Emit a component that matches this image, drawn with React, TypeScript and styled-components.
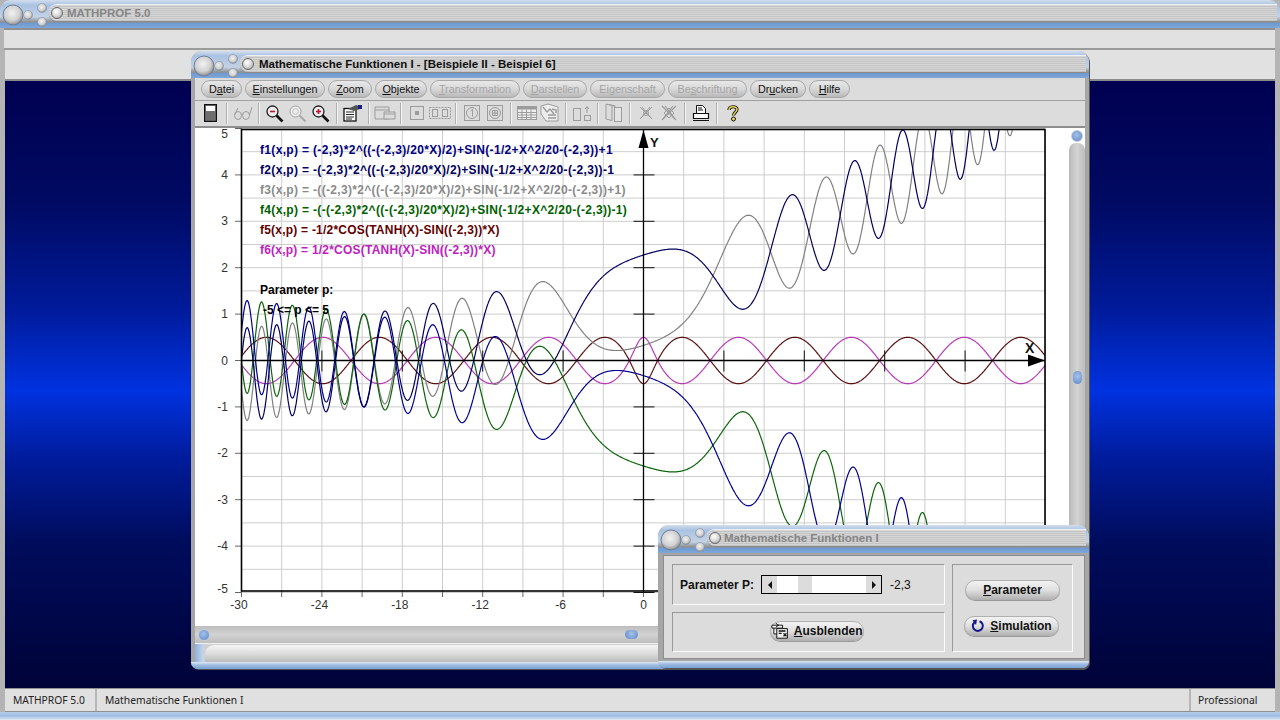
import * as React from 'react';
import styled, { createGlobalStyle } from 'styled-components';

const GlobalStyle = createGlobalStyle`
  html, body {
    margin: 0;
    padding: 0;
    overflow: hidden;
    background: #000;
    font-family: 'Liberation Sans', Arial, sans-serif;
  }
`;

const Screen = styled.div`
  width: 1280px;
  height: 720px;
  display: flex;
  flex-direction: column;
  overflow: hidden;
  background: #b4b4b4;
`;

const Title = styled.div<{ $height: number }>`
  height: ${p => p.$height}px;
  flex: none;
  box-sizing: border-box;
  display: flex;
  align-items: flex-start;
  padding: 3px 3px 0 2px;
  border-radius: 11px 11px 0 0;
  background: linear-gradient(180deg, #d3deee 0, #a9c2e2 18%, #c4d2e6 60%, #8f8f8f 78%, #6f9bd2 84%, #7fa7da 100%);
`;

const TitleTrack = styled.div`
  flex: 1;
  height: 16px;
  margin-top: 2px;
  margin-left: -1px;
  display: flex;
  align-items: center;
  gap: 4px;
  padding-left: 2px;
  border-radius: 9px 0 0 9px;
  box-shadow: 0 1px 0 #8a8a8a, 0 -1px 0 #eef0f4;
  background: repeating-linear-gradient(180deg, #d6d6d6 0 1px, #c4c4c4 1px 2px);
`;

const TitleBall = styled.span`
  width: 12px;
  height: 12px;
  flex: none;
  border-radius: 50%;
  border: 1px solid #6a6a6a;
  box-sizing: border-box;
  background: radial-gradient(circle at 40% 35%, #fff 0, #d8d8d8 50%, #8f8f8f 100%);
`;

const TitleText = styled.span<{ $dim?: boolean; $nudge?: number }>`
  font-size: 11.5px;
  font-weight: bold;
  padding-right: 6px;
  white-space: nowrap;
  margin-left: ${p => p.$nudge || 0}px;
  color: ${p => (p.$dim ? '#858585' : '#101010')};
`;

const Frame = styled.div`
  flex: 1;
  min-height: 0;
  display: flex;
  flex-direction: column;
  padding: 0 5px;
`;

const TopStrip = styled.div`
  height: 22px;
  flex: none;
  box-sizing: border-box;
  border-top: 2px solid #8f8f8f;
  border-bottom: 2px solid #9a9a9a;
  background: #e1e1e1;
  margin-left: -1px;
`;

const Workspace = styled.div`
  flex: 1;
  min-height: 0;
  position: relative;
  display: flex;
  flex-direction: column;
`;

const SecondStrip = styled.div`
  height: 31px;
  flex: none;
  box-sizing: border-box;
  border-bottom: 2px solid #8b8b8b;
  background: #e1e1e1;
`;

const Desktop = styled.div`
  flex: 1;
  background: linear-gradient(180deg, #000050 0, #000a62 20%, #001a98 37%, #0032e0 51%, #001c9c 62%, #000c5c 76%, #000338 100%);
`;

const Win = styled.div<{ $left: number; $top: number; $width: number; $height: number }>`
  position: absolute;
  left: ${p => p.$left}px;
  top: ${p => p.$top}px;
  width: ${p => p.$width}px;
  height: ${p => p.$height}px;
  display: flex;
  flex-direction: column;
  border-radius: 11px 11px 7px 7px;
  background: #a6a6a6;
  box-shadow: 1px 1px 0 #555;
`;

const WinEnd = styled.div`
  height: 7px;
  flex: none;
  border-radius: 0 0 7px 7px;
  background: linear-gradient(180deg, #dfe8f4 0, #9dbbe0 45%, #7aa2d6 100%);
`;

const WinBody = styled.div`
  flex: 1;
  min-height: 0;
  display: flex;
  flex-direction: column;
  padding: 0 4px;
`;

const MenuBar = styled.div`
  height: 23px;
  flex: none;
  box-sizing: border-box;
  display: flex;
  align-items: center;
  gap: 3px;
  padding: 0 0 1px 6px;
  background: #dcdcdc;
  border-bottom: 1px solid #a0a0a0;
`;

const MenuPill = styled.div<{ $off?: boolean; $width: number }>`
  width: ${p => p.$width}px;
  height: 18px;
  box-sizing: border-box;
  display: flex;
  align-items: center;
  justify-content: center;
  border-radius: 9px;
  border: 1px solid #a8a8a8;
  font-size: 10.8px;
  background: linear-gradient(180deg, #e8e8e8 0, #d8d8d8 50%, #b8b8b8 100%);
  color: ${p => (p.$off ? '#a4a4a4' : '#111')};
`;

const ToolBar = styled.div`
  height: 27px;
  flex: none;
  box-sizing: border-box;
  display: flex;
  align-items: center;
  padding: 0 0 1px 4px;
  background: #dcdcdc;
  border-bottom: 2px solid #8e8e8e;
`;

const ToolItem = styled.div`
  width: 23px;
  height: 20px;
  flex: none;
  display: flex;
  align-items: center;
  justify-content: center;
`;

const ToolSep = styled.span`
  width: 1px;
  height: 21px;
  flex: none;
  margin: 0 4px;
  background: #b0b0b0;
  box-shadow: 1px 0 0 #f4f4f4;
`;

const Content = styled.div`
  flex: 1;
  min-height: 0;
  display: flex;
  background: #fff;
`;

const PlotArea = styled.div`
  position: relative;
  width: 874px;
  flex: none;
`;

const Legend = styled.div`
  position: absolute;
  left: 65px;
  top: 12px;
  display: flex;
  flex-direction: column;
  font-size: 12px;
  font-weight: bold;
`;

const LegendRow = styled.div<{ $color?: string; $spacing?: number; $indent?: number }>`
  height: 20px;
  line-height: 20px;
  white-space: nowrap;
  letter-spacing: ${p => p.$spacing || 0}px;
  margin-left: ${p => p.$indent || 0}px;
  color: ${p => p.$color || '#000'};
`;

const VScroll = styled.div`
  flex: 1;
  display: flex;
  flex-direction: column;
  align-items: center;
  padding-top: 2px;
  gap: 1px;
`;

const VTrack = styled.div`
  flex: 1;
  width: 100%;
  position: relative;
  border-radius: 7px 7px 0 0;
  background: linear-gradient(90deg, #b8b8b8 0, #d4d4d4 50%, #bcbcbc 100%);
`;

const ScrollBall = styled.span`
  width: 12px;
  height: 12px;
  flex: none;
  border-radius: 50%;
  border: 1px solid #c4ccd8;
  box-sizing: border-box;
  background: radial-gradient(circle at 45% 40%, #a6c2ea 0, #6d94cf 75%, #5c7fb6 100%);
`;

const ScrollThumb = styled.span<{ $vertical?: boolean }>`
  position: absolute;
  width: ${p => (p.$vertical ? 9 : 13)}px;
  height: ${p => (p.$vertical ? 13 : 9)}px;
  border-radius: 6px;
  background: radial-gradient(circle at 50% 40%, #a6c2ea 0, #6d94cf 80%, #5c7fb6 100%);
  ${p => (p.$vertical ? 'left: 4px; top: 228px;' : 'left: 430px; top: 4px;')}
`;

const HScroll = styled.div`
  height: 17px;
  flex: none;
  position: relative;
  display: flex;
  align-items: center;
  padding-left: 3px;
  border-bottom: 1px solid #f0f0f0;
  background: linear-gradient(180deg, #bdbdbd 0, #d2d2d2 50%, #bebebe 100%);
`;

const LowerBar = styled.div`
  height: 18px;
  flex: none;
  display: flex;
  background: linear-gradient(90deg, #8fb0de 0, #c4d4ea 8px, #d0d0d0 10px);
`;

const LowerFill = styled.div`
  flex: 1;
  margin-top: 1px;
  margin-left: 10px;
  border-radius: 9px 0 0 0;
  background: linear-gradient(180deg, #f4f4f4 0, #dddddd 50%, #bbbbbb 100%);
`;

const StatusBar = styled.div`
  height: 24px;
  flex: none;
  box-sizing: border-box;
  display: flex;
  background: #e0e0e0;
  border-top: 1px solid #8f8f8f;
  border-bottom: 1px solid #8f8f8f;
`;

const StatusCell = styled.div<{ $width?: number }>`
  box-sizing: border-box;
  display: flex;
  align-items: center;
  padding-left: ${p => (p.$width === 84 ? 7 : 8)}px;
  font-size: 10.3px;
  font-family: 'Noto Sans', sans-serif;
  color: #222;
  border-right: 2px solid #b6b6b6;
  ${p => (p.$width ? `width: ${p.$width}px; flex: none;` : 'flex: 1;')}
  &:last-child {
    border-right: 0;
  }
`;

const BottomEdge = styled.div`
  height: 8px;
  flex: none;
  background: linear-gradient(180deg, #b4cce8 0, #9fbde2 50%, #dfe8f4 100%);
`;

const DialogBody = styled.div`
  flex: 1;
  min-height: 0;
  margin: 2px 4px 2px 5px;
  padding: 8px;
  box-sizing: border-box;
  background: #dcdcdc;
  border: 1px solid #8c8c8c;
  display: grid;
  grid-template-columns: 273px 121px;
  grid-template-rows: 41px 40px;
  gap: 7px;
`;

const Group = styled.div<{ $span?: boolean }>`
  box-sizing: border-box;
  border-top: 1px solid #9a9a9a;
  border-left: 1px solid #9a9a9a;
  border-bottom: 1px solid #fbfbfb;
  border-right: 1px solid #fbfbfb;
  display: flex;
  align-items: center;
  ${p => (p.$span ? 'grid-column: 2; grid-row: 1 / span 2; flex-direction: column; padding-top: 15px; gap: 16px;' : '')}
`;

const ParamRow = styled(Group)`
  padding-left: 7px;
  font-size: 12px;
  font-weight: bold;
  color: #111;
`;

const ParamValue = styled.span`
  margin-left: 8px;
  font-weight: normal;
  font-size: 12px;
`;

const Slider = styled.div`
  width: 121px;
  height: 19px;
  flex: none;
  margin-left: 7px;
  box-sizing: border-box;
  border: 1px solid #000;
  display: flex;
  align-items: stretch;
  background: #fff;
`;

const SliderEnd = styled.div`
  width: 15px;
  flex: none;
  background: #dcdcdc;
  display: flex;
  align-items: center;
  justify-content: center;
`;

const Arrow = styled.span<{ $right?: boolean }>`
  width: 0;
  height: 0;
  border-top: 4px solid transparent;
  border-bottom: 4px solid transparent;
  ${p => (p.$right ? 'border-left: 4px solid #111;' : 'border-right: 4px solid #111;')}
`;

const SliderTrack = styled.div`
  flex: 1;
  padding-left: 21px;
`;

const SliderKnob = styled.div`
  width: 14px;
  height: 100%;
  background: #dcdcdc;
`;

const RoundButton = styled.div<{ $width: number; $shift?: number }>`
  width: ${p => p.$width}px;
  height: 20px;
  flex: none;
  box-sizing: border-box;
  display: flex;
  align-items: center;
  justify-content: center;
  gap: 5px;
  font-size: 12px;
  font-weight: bold;
  color: #111;
  border-radius: 10px;
  border: 1px solid #b0b0b0;
  background: linear-gradient(180deg, #f2f2f2 0, #e0e0e0 50%, #b4b4b4 100%);
  box-shadow: 0 1px 0 #9a9a9a;
  margin-left: ${p => p.$shift || 0}px;
`;

const HideGroup = styled(Group)`
  justify-content: center;
  padding-bottom: 2px;
`;

const Knobs = ({ id }: { id: string }) => (
  <svg width="48" height="24" viewBox="0 0 48 24" style={{ flex: 'none' }}>
    <defs>
      <radialGradient id={id} cx="45%" cy="40%" r="60%">
        <stop offset="0" stopColor="#f2f2f2" />
        <stop offset="0.65" stopColor="#d0d0d0" />
        <stop offset="1" stopColor="#8c8c8c" />
      </radialGradient>
    </defs>
    <circle cx="11" cy="12" r="10" fill={`url(#${id})`} stroke="#6b7f99" strokeWidth="1" />
    <circle cx="26" cy="12" r="4.500" fill={`url(#${id})`} stroke="#8194ad" strokeWidth="0.6" />
    <circle cx="40" cy="5" r="4.500" fill={`url(#${id})`} stroke="#8194ad" strokeWidth="0.6" />
    <circle cx="40" cy="19" r="4.500" fill={`url(#${id})`} stroke="#8194ad" strokeWidth="0.6" />
  </svg>
);

const Lens = ({ mark, off }: { mark?: 'plus' | 'minus'; off?: boolean }) => {
  const c = off ? '#a0a0a0' : '#222';
  return (
    <svg width="19" height="19" viewBox="0 0 19 19">
      <circle cx="7.5" cy="7.5" r="5.5" fill={off ? '#ececec' : '#eee'} stroke={c} strokeWidth={off ? 1 : 1.3} />
      <circle cx="7.5" cy="7.5" r="2.8" fill="none" stroke={off ? '#c0c0c0' : 'none'} />
      {mark && <path d="M5 7.5h5" stroke="#c01030" strokeWidth="1.6" />}
      {mark === 'plus' && <path d="M7.5 5v5" stroke="#c01030" strokeWidth="1.6" />}
      <path d="M11.5 11.5L17.5 17.5" stroke={off ? '#a8a8a8' : '#111'} strokeWidth={off ? 2 : 2.6} />
    </svg>
  );
};

const Gray = '#9c9c9c';

const glyphs: Record<string, React.ReactElement> = {
  power: (
    <svg width="13" height="18" viewBox="0 0 13 18">
      <rect x="0.5" y="0.5" width="12" height="17" fill="#777" stroke="#111" strokeWidth="1.4" />
      <rect x="2" y="2" width="9" height="5" fill="#fff" />
      <rect x="2" y="7" width="9" height="9" fill="#6e6e6e" />
    </svg>
  ),
  glasses: (
    <svg width="20" height="16" viewBox="0 0 20 16" fill="none" stroke={Gray}>
      <ellipse cx="5" cy="10.5" rx="3.5" ry="4" />
      <ellipse cx="13" cy="10.5" rx="3.5" ry="4" />
      <path d="M8.5 9.5q1-1 1.500 0M1.500 10L5 3M16.500 10L19 2" />
    </svg>
  ),
  zoomOut: <Lens mark="minus" />,
  zoom: <Lens off />,
  zoomIn: <Lens mark="plus" />,
  props: (
    <svg width="20" height="18" viewBox="0 0 20 18" fill="none">
      <rect x="1" y="4.500" width="12" height="12.500" fill="#fff" stroke="#111" strokeWidth="1.3" />
      <path d="M3 8h8M3 10.500h8M3 13h8M3 15h6" stroke="#222" />
      <path d="M5 5L13 1l4 1v3l-6 2z" fill="#555" />
      <path d="M15 1h4v4h-4z" fill="#1b1b90" />
    </svg>
  ),
  windows: (
    <svg width="22" height="16" viewBox="0 0 22 16" fill="none" stroke={Gray}>
      <path d="M1 2h14v12H1zM1 5h14" />
      <path d="M10 7h11v7H10zM10 9h11" fill="#dcdcdc" />
    </svg>
  ),
  single: (
    <svg width="14" height="14" viewBox="0 0 14 14" fill="none" stroke={Gray}>
      <rect x="0.500" y="0.500" width="13" height="13" />
      <rect x="5" y="5" width="4" height="4" fill={Gray} stroke="none" />
    </svg>
  ),
  double: (
    <svg width="22" height="14" viewBox="0 0 22 14" fill="none" stroke={Gray}>
      <rect x="0.500" y="1.500" width="21" height="11" strokeDasharray="2 1" />
      <rect x="3.500" y="3.500" width="5" height="7" />
      <rect x="13.500" y="3.500" width="5" height="7" />
    </svg>
  ),
  one: (
    <svg width="18" height="18" viewBox="0 0 18 18" fill="none" stroke={Gray}>
      <rect x="1.500" y="1.500" width="15" height="15" />
      <circle cx="9" cy="9" r="5.500" />
      <path d="M7.500 7L9.500 5.500V12.500" />
    </svg>
  ),
  other: (
    <svg width="18" height="18" viewBox="0 0 18 18" fill="none" stroke={Gray}>
      <rect x="1.500" y="1.500" width="15" height="15" />
      <circle cx="9" cy="9" r="5.500" />
      <path d="M6.500 6.500h5v5h-5zM9 6.500v5M6.500 9h5" />
    </svg>
  ),
  table: (
    <svg width="20" height="16" viewBox="0 0 20 16" fill="none" stroke={Gray}>
      <rect x="0.500" y="1.500" width="19" height="13" fill="#efefef" />
      <rect x="1" y="2" width="18" height="2.500" fill={Gray} stroke="none" />
      <path d="M1 7.500h18M1 10h18M1 12.500h18M5 4.500v10M9.500 4.500v10M14 4.500v10" />
    </svg>
  ),
  picture: (
    <svg width="20" height="20" viewBox="0 0 20 20" fill="none" stroke={Gray}>
      <path d="M1 3l7-2 10 3v14H6L1 11z" fill="#ededed" />
      <path d="M3 4l4 5 3-3 4 5M8 12h8M8 15h8M12 6l4 1v3" strokeWidth="1.500" />
    </svg>
  ),
  swap: (
    <svg width="20" height="18" viewBox="0 0 20 18" fill="none" stroke={Gray}>
      <rect x="1.500" y="4.500" width="7" height="12" />
      <rect x="12.500" y="11.500" width="6" height="5" />
      <path d="M15 9V3M13 5l2-2.500L17 5" />
    </svg>
  ),
  pages: (
    <svg width="18" height="20" viewBox="0 0 18 20" fill="none" stroke={Gray}>
      <path d="M1 1l6 1.500v15L1 16zM4 1.500l6 1.500v15M7 2.500l3 .5" />
      <rect x="9.500" y="4.500" width="7" height="14" fill="#e4e4e4" />
    </svg>
  ),
  cross: (
    <svg width="16" height="16" viewBox="0 0 16 16" fill="none" stroke={Gray}>
      <path d="M2 2l12 12M14 2L2 14M4 2l10 12M12 2L2 14" />
      <circle cx="8" cy="8" r="2.500" />
    </svg>
  ),
  crossBox: (
    <svg width="18" height="18" viewBox="0 0 18 18" fill="none" stroke={Gray}>
      <path d="M2 2l14 14M16 2L2 16M5 2l11 14M13 2L2 16" strokeWidth="1.200" />
      <path d="M9 4l5 5-5 5-5-5z" />
    </svg>
  ),
  printer: (
    <svg width="18" height="18" viewBox="0 0 18 18" fill="none" stroke="#111">
      <path d="M4.500 1.500h6l3 3v5h-9z" fill="#fff" />
      <path d="M6 4h4M6 6h5" />
      <path d="M1.500 9.500h15v5h-15zM1 16.500h16" strokeWidth="1.200" fill="#fff" />
    </svg>
  ),
  help: (
    <svg width="12" height="18" viewBox="0 0 12 18" fill="none">
      <path d="M2 6C2 2 10 1.500 10 5.500 10 8 6.500 8.500 6.500 11.500" stroke="#111" strokeWidth="3.200" />
      <path d="M2 6C2 2 10 1.500 10 5.500 10 8 6.500 8.500 6.500 11.500" stroke="#ecd84a" strokeWidth="1.500" />
      <circle cx="6.500" cy="15" r="2" fill="#ecd84a" stroke="#111" />
    </svg>
  ),
};

const toolbarLayout = [
  'power', '|', 'glasses', '|', 'zoomOut', 'zoom', 'zoomIn', '|', 'props', '|', 'windows', '|',
  'single', 'double', '|', 'one', 'other', '|', 'table', 'picture', '|', 'swap', '|', 'pages', '|',
  'cross', 'crossBox', '|', 'printer', '|', 'help',
];

const menuItems: { before: string; key: string; after: string; width: number; off?: boolean }[] = [
  { before: 'D', key: 'a', after: 'tei', width: 41 },
  { before: '', key: 'E', after: 'instellungen', width: 80 },
  { before: '', key: 'Z', after: 'oom', width: 44 },
  { before: '', key: 'O', after: 'bjekte', width: 52 },
  { before: '', key: 'T', after: 'ransformation', width: 90, off: true },
  { before: '', key: 'D', after: 'arstellen', width: 64, off: true },
  { before: 'Ei', key: 'g', after: 'enschaft', width: 75, off: true },
  { before: 'Be', key: 's', after: 'chriftung', width: 79, off: true },
  { before: 'Dr', key: 'u', after: 'cken', width: 56 },
  { before: '', key: 'H', after: 'ilfe', width: 41 },
];

const formulas = [
  { color: '#000080', spacing: 0.33, text: 'f1(x,p) = (-2,3)*2^((-(-2,3)/20*X)/2)+SIN(-1/2+X^2/20-(-2,3))+1' },
  { color: '#000060', spacing: 0.33, text: 'f2(x,p) = -(-2,3)*2^((-(-2,3)/20*X)/2)+SIN(-1/2+X^2/20-(-2,3))-1' },
  { color: '#8a8a8a', spacing: 0.33, text: 'f3(x,p) = -((-2,3)*2^((-(-2,3)/20*X)/2)+SIN(-1/2+X^2/20-(-2,3))+1)' },
  { color: '#006000', spacing: 0.33, text: 'f4(x,p) = -(-(-2,3)*2^((-(-2,3)/20*X)/2)+SIN(-1/2+X^2/20-(-2,3))-1)' },
  { color: '#600000', spacing: 0.22, text: 'f5(x,p) = -1/2*COS(TANH(X)-SIN((-2,3))*X)' },
  { color: '#c020c0', spacing: 0.22, text: 'f6(x,p) = 1/2*COS(TANH(X)-SIN((-2,3))*X)' },
];

const P = -2.3;
const amp = (x: number) => Math.pow(2, (-P / 20 * x) / 2);
const wave = (x: number) => Math.sin(-0.5 + (x * x) / 20 - P);
const osc = (x: number) => Math.cos(Math.tanh(x) - Math.sin(P) * x);

const curves: { color: string; fn: (x: number) => number }[] = [
  { color: '#b838b8', fn: x => 0.5 * osc(x) },
  { color: '#5a1010', fn: x => -0.5 * osc(x) },
  { color: '#808080', fn: x => -(P * amp(x) + wave(x) + 1) },
  { color: '#0a640a', fn: x => -(-P * amp(x) + wave(x) - 1) },
  { color: '#000090', fn: x => P * amp(x) + wave(x) + 1 },
  { color: '#000060', fn: x => -P * amp(x) + wave(x) - 1 },
];

const X0 = 643.5;
const Y0 = 360.5;
const SX = 13.4;
const SY = 46.4;

const curvePath = (fn: (x: number) => number) => {
  let d = '';
  for (let x = -30; x <= 30; x += 0.04) {
    d += `${d ? 'L' : 'M'}${(X0 + x * SX).toFixed(1)} ${(Y0 - fn(x) * SY).toFixed(1)}`;
  }
  return d;
};

const range = (from: number, to: number, step: number) => {
  const out: number[] = [];
  for (let v = from; v <= to + 1e-6; v += step) out.push(v);
  return out;
};

const Chart = () => (
  <svg width="874" height="498" viewBox="195 128 874 498" style={{ display: 'block' }}>
    <defs>
      <clipPath id="plotClip">
        <rect x="242" y="130" width="803" height="461" />
      </clipPath>
    </defs>
    {range(-30, 30, 3).map(v => (
      <line key={v} x1={X0 + v * SX} x2={X0 + v * SX} y1="130" y2="591" stroke="#cdcdcd" />
    ))}
    {range(-5, 5, 0.5).map(v => (
      <line key={v} x1="242" x2="1045" y1={Y0 - v * SY} y2={Y0 - v * SY} stroke="#cdcdcd" />
    ))}
    {range(-5, 5, 1).map(v => (
      <line key={v} x1="235" x2="242" y1={Y0 - v * SY} y2={Y0 - v * SY} stroke="#666" />
    ))}
    {range(-30, 0, 3).map(v => (
      <line key={v} x1={X0 + v * SX} x2={X0 + v * SX} y1="591" y2="597" stroke="#666" />
    ))}
    <g clipPath="url(#plotClip)" fill="none" strokeWidth="1.2">
      {curves.map(c => (
        <path key={c.color} d={curvePath(c.fn)} stroke={c.color} />
      ))}
    </g>
    <rect x="241.500" y="129.500" width="803.500" height="461.500" fill="none" stroke="#000" strokeWidth="1.600" />
    <path d={`M${X0} 130V591M242 ${Y0}H1045`} stroke="#000" strokeWidth="1.300" fill="none" />
    {[-5, -4, -3, -2, -1, 1, 2, 3, 4].map(v => (
      <line key={v} x1={X0 - 10} x2={X0 + 11} y1={Y0 - v * SY} y2={Y0 - v * SY} stroke="#111" />
    ))}
    {[-24, -18, -12, -6, 6, 12, 18, 24].map(v => (
      <line key={v} x1={X0 + v * SX} x2={X0 + v * SX} y1={Y0 - 10} y2={Y0 + 11} stroke="#111" />
    ))}
    <path d="M643.500 130l-5 18h10z" fill="#000" />
    <path d="M1045 360.500l-17-6v12z" fill="#000" />
    <text x="650" y="147" fontSize="13" fontWeight="bold" fill="#111">Y</text>
    <text x="1025" y="353" fontSize="14" fontWeight="bold" fill="#111">X</text>
    <g fontSize="12" fill="#333" textAnchor="end">
      {range(-5, 5, 1).map(v => {
        const shift = v === 5 ? 9 : v === -5 ? 0 : 4;
        return (
          <text key={v} x="228" y={Y0 - v * SY + shift}>{v}</text>
        );
      })}
    </g>
    <g fontSize="12" fill="#333" textAnchor="middle">
      {[-30, -24, -18, -12, -6, 0].map(v => (
        <text key={v} x={X0 + v * SX - (v === 0 ? 0 : 2.500)} y="609">{v}</text>
      ))}
    </g>
  </svg>
);

const HideIcon = () => (
  <svg width="19" height="18" viewBox="0 0 19 18" fill="none" stroke="#111">
    <path d="M1 3h11v3H1zM3 6v6h3" fill="#fff" />
    <path d="M6 6.500h11v10H6z" fill="#eee" />
    <path d="M8 9h7M8 11.500h3M13 11.500l3 3M16 11.500l-3 3" strokeWidth="1.300" />
    <path d="M5 1l3 2-3 2" />
  </svg>
);

const SpinIcon = () => (
  <svg width="14" height="14" viewBox="0 0 14 14" fill="none">
    <path d="M8.500 2.200A5 5 0 1 1 3.500 3.200" stroke="#16168a" strokeWidth="2" />
    <path d="M6 0.500L1.500 1.200 5 6z" fill="#16168a" />
  </svg>
);

export default function App() {
  return (
    <Screen>
      <GlobalStyle />
      <Title $height={28}>
        <Knobs id="knobMain" />
        <TitleTrack>
          <TitleBall />
          <TitleText $dim>MATHPROF 5.0</TitleText>
        </TitleTrack>
      </Title>
      <Frame>
        <TopStrip />
        <Workspace>
          <SecondStrip />
          <Desktop />
          <Win $left={186} $top={1} $width={898} $height={618}>
            <Title $height={27}>
              <Knobs id="knobChild" />
              <TitleTrack>
                <TitleBall />
                <TitleText $nudge={1}>Mathematische Funktionen I - [Beispiele II - Beispiel 6]</TitleText>
              </TitleTrack>
            </Title>
            <WinBody>
              <MenuBar>
                {menuItems.map(m => (
                  <MenuPill key={m.after} $off={m.off} $width={m.width}>
                    <span>
                      {m.before}
                      <u>{m.key}</u>
                      {m.after}
                    </span>
                  </MenuPill>
                ))}
              </MenuBar>
              <ToolBar>
                {toolbarLayout.map((t, i) =>
                  t === '|' ? <ToolSep key={i} /> : <ToolItem key={i}>{glyphs[t]}</ToolItem>
                )}
              </ToolBar>
              <Content>
                <PlotArea>
                  <Chart />
                  <Legend>
                    {formulas.map(f => (
                      <LegendRow key={f.text} $color={f.color} $spacing={f.spacing}>{f.text}</LegendRow>
                    ))}
                    <LegendRow />
                    <LegendRow>Parameter p:</LegendRow>
                    <LegendRow $indent={3}>-5 &lt;= p &lt;= 5</LegendRow>
                  </Legend>
                </PlotArea>
                <VScroll>
                  <ScrollBall />
                  <VTrack>
                    <ScrollThumb $vertical />
                  </VTrack>
                </VScroll>
              </Content>
              <HScroll>
                <ScrollBall />
                <ScrollThumb />
              </HScroll>
              <LowerBar>
                <LowerFill />
              </LowerBar>
            </WinBody>
            <WinEnd />
          </Win>
          <Win $left={653} $top={475} $width={431} $height={143}>
            <Title $height={28}>
              <Knobs id="knobDialog" />
              <TitleTrack>
                <TitleBall />
                <TitleText $dim $nudge={-1}>Mathematische Funktionen I</TitleText>
              </TitleTrack>
            </Title>
            <DialogBody>
              <ParamRow>
                Parameter P:
                <Slider>
                  <SliderEnd><Arrow /></SliderEnd>
                  <SliderTrack><SliderKnob /></SliderTrack>
                  <SliderEnd><Arrow $right /></SliderEnd>
                </Slider>
                <ParamValue>-2,3</ParamValue>
              </ParamRow>
              <Group $span>
                <RoundButton $width={95}>
                  <span><u>P</u>arameter</span>
                </RoundButton>
                <RoundButton $width={95} $shift={-2}>
                  <SpinIcon />
                  <span><u>S</u>imulation</span>
                </RoundButton>
              </Group>
              <HideGroup>
                <RoundButton $width={94} $shift={16}>
                  <HideIcon />
                  <span><u>A</u>usblenden</span>
                </RoundButton>
              </HideGroup>
            </DialogBody>
            <WinEnd />
          </Win>
        </Workspace>
        <StatusBar>
          <StatusCell $width={92}>MATHPROF 5.0</StatusCell>
          <StatusCell>Mathematische Funktionen I</StatusCell>
          <StatusCell $width={84}>Professional</StatusCell>
        </StatusBar>
      </Frame>
      <BottomEdge />
    </Screen>
  );
}
